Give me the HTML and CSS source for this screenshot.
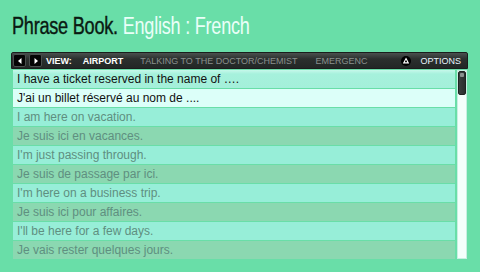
FILE: index.html
```html
<!DOCTYPE html>
<html>
<head>
<meta charset="utf-8">
<link rel="stylesheet" href="styles.css">
</head>
<body>
<header class="header">
  <h1 class="title"><span class="title-main">Phrase Book.</span> <span class="title-sub">English : French</span></h1>
</header>
<div class="panel">
  <div class="toolbar">
    <div class="nav">
      <span class="navbtn"><svg width="8" height="8" viewBox="0 0 8 8"><path d="M5.5 1 L2 4 L5.5 7 Z" fill="#fff"/></svg></span>
      <span class="navbtn"><svg width="8" height="8" viewBox="0 0 8 8"><path d="M2.5 1 L6 4 L2.5 7 Z" fill="#fff"/></svg></span>
    </div>
    <div class="tabs">
      <span class="tab label">VIEW:</span>
      <span class="tab active">AIRPORT</span>
      <span class="tab">TALKING TO THE DOCTOR/CHEMIST</span>
      <span class="tab">EMERGENC</span>
    </div>
    <div class="options">
      <span class="opticon"><svg width="10" height="10" viewBox="0 0 10 10"><circle cx="5" cy="5" r="5" fill="#000"/><path d="M5 2.6 L7.3 6.9 L2.7 6.9 Z" fill="none" stroke="#fff" stroke-width="1.1"/></svg></span>
      <span class="optlabel">OPTIONS</span>
    </div>
  </div>
  <div class="body">
    <ul class="rows">
      <li class="row en selected">I have a ticket reserved in the name of ….</li>
      <li class="row fr current">J'ai un billet réservé au nom de ....</li>
      <li class="row en">I am here on vacation.</li>
      <li class="row fr">Je suis ici en vacances.</li>
      <li class="row en">I'm just passing through.</li>
      <li class="row fr">Je suis de passage par ici.</li>
      <li class="row en">I'm here on a business trip.</li>
      <li class="row fr">Je suis ici pour affaires.</li>
      <li class="row en">I'll be here for a few days.</li>
      <li class="row fr">Je vais rester quelques jours.</li>
    </ul>
    <div class="scrollbar"><div class="thumb"></div></div>
  </div>
</div>
</body>
</html>
```

FILE: styles.css
```css
* { box-sizing: border-box; }
html, body { margin: 0; padding: 0; }
body {
  width: 480px;
  height: 272px;
  overflow: hidden;
  background: #69dea8;
  font-family: "Liberation Sans", Arial, sans-serif;
}
.header {
  height: 52px;
  padding: 13px 0 0 12px;
}
.title {
  margin: 0;
  display: inline-block;
  white-space: nowrap;
  transform: scaleX(0.787);
  transform-origin: 0 0;
  font-family: "Liberation Sans", sans-serif;
  font-size: 23px;
  font-weight: normal;
  line-height: 26px;
  letter-spacing: -0.3px;
}
.title-main { color: #0a1a12; -webkit-text-stroke: 0.4px #0a1a12; }
.title-sub { color: #eafff8; }
.panel {
  margin: 0 12px 0 11px;
}
.toolbar {
  height: 17px;
  display: flex;
  align-items: center;
  background: linear-gradient(#4a504e, #2b302e 40%, #232726);
  border: 1px solid #1a1d1c;
  border-radius: 2px 2px 0 0;
  padding: 0 6px 0 1px;
  font-size: 9px;
  color: #fff;
}
.nav { display: flex; gap: 3px; }
.navbtn {
  width: 13px;
  height: 13px;
  background: #050505;
  border: 1px solid #4a4f4e;
  border-radius: 2px;
  display: flex;
  align-items: center;
  justify-content: center;
}
.navbtn svg { display: block; }
.tabs {
  flex: 1;
  display: flex;
  overflow: hidden;
  white-space: nowrap;
  padding-left: 4px;
}
.tab {
  color: #8a908e;
  margin-right: 18px;
}
.tab.label { color: #fff; margin-right: 11px; font-weight: bold; }
.tab.active { color: #fff; font-weight: bold; margin-right: 17px; }
.options { display: flex; align-items: center; gap: 9px; }
.opticon svg { display: block; }
.optlabel { color: #eaf6ff; }
.body {
  display: flex;
  gap: 2px;
  padding: 1px 0 0 2px;
}
.rows {
  list-style: none;
  margin: 0;
  padding: 0;
  width: 442px;
  display: flex;
  flex-direction: column;
  gap: 1px;
}
.row {
  height: 18px;
  line-height: 18px;
  padding-left: 4px;
  font-size: 12px;
  color: #5f8f80;
  white-space: nowrap;
  overflow: hidden;
}
.row.en { background: #97eed8; }
.row.fr { background: #8bd8b1; }
.row.selected {
  background: linear-gradient(#c6f8ea, #a6f1dc 4px, #a4f0da);
  color: #111;
}
.row.current { background: #dcfff9; color: #111; }
.scrollbar {
  width: 10px;
  height: 189px;
  background: #f4fffc;
  border: 1px solid #c8efe2;
}
.thumb {
  width: 8px;
  height: 24px;
  background: linear-gradient(90deg, #3a3f3e, #2a2e2d);
  border: 1px solid #1f2322;
  border-radius: 2px;
}
.thumb::before {
  content: "";
  display: block;
  height: 4px;
  margin: 1px;
  background: #8a908e;
  border-radius: 1px;
}
```
